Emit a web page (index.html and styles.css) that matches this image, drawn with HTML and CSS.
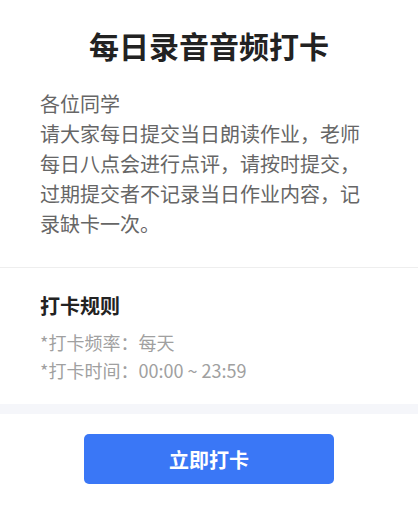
FILE: index.html
```html
<!DOCTYPE html>
<html>
<head>
  <meta charset="utf-8">
  <title>每日录音音频打卡</title>
  <link rel="stylesheet" href="styles.css">
</head>
<body>
  <div class="page">
    <div class="intro">
      <h1 class="title">每日录音音频打卡</h1>
      <div class="desc">
        <p>各位同学</p>
        <p>请大家每日提交当日朗读作业，老师每日八点会进行点评，请按时提交，过期提交者不记录当日作业内容，记录缺卡一次。</p>
      </div>
    </div>

    <div class="rules">
      <h2 class="rules-title">打卡规则</h2>
      <p class="rule">*打卡频率：每天</p>
      <p class="rule">*打卡时间：00:00 ~ 23:59</p>
    </div>

    <div class="gap"></div>

    <div class="actions">
      <button class="btn-primary">立即打卡</button>
    </div>
  </div>
</body>
</html>
```

FILE: styles.css
```css
body {
  margin: 0;
  background: #fff;
  font-family: 'Noto Sans CJK SC', 'Noto Sans', sans-serif;
  color: #333;
}

p, h1, h2 {
  margin: 0;
}

.intro {
  padding: 24px 40px 28px;
  border-bottom: 1px solid #eeeeee;
}

.title {
  font-size: 30px;
  line-height: 42px;
  font-weight: bold;
  text-align: center;
  color: #222;
}

.desc {
  margin-top: 23px;
  font-size: 20px;
  line-height: 30px;
  color: #666;
}

.rules {
  padding: 23px 40px 20px;
}

.rules-title {
  font-size: 20px;
  line-height: 30px;
  font-weight: bold;
  color: #222;
}

.rule {
  font-size: 18px;
  line-height: 28px;
  color: #a0a0a0;
}

.rules-title + .rule {
  margin-top: 7px;
}

.gap {
  height: 10px;
  background: #f5f6fa;
}

.actions {
  display: flex;
  justify-content: center;
  padding-top: 20px;
}

.btn-primary {
  width: 250px;
  height: 50px;
  border: none;
  border-radius: 5px;
  background: #3a77f6;
  color: #fff;
  font-family: inherit;
  font-size: 20px;
  font-weight: bold;
  cursor: pointer;
}
```
